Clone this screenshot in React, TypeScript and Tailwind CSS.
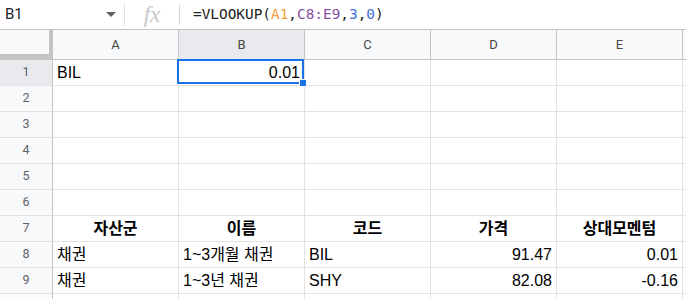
import type { ReactNode } from 'react'

const COLS = ['A', 'B', 'C', 'D', 'E', 'F']
const cellFont = { fontFamily: '"Liberation Sans", Arial, "Noto Sans CJK KR", sans-serif' }

type Cell = { text?: string; align?: 'left' | 'right' | 'center'; bold?: boolean }

const rows: Cell[][] = [
  [{ text: 'BIL' }, { text: '0.01', align: 'right' }],
  [],
  [],
  [],
  [],
  [],
  [
    { text: '자산군', align: 'center', bold: true },
    { text: '이름', align: 'center', bold: true },
    { text: '코드', align: 'center', bold: true },
    { text: '가격', align: 'center', bold: true },
    { text: '상대모멘텀', align: 'center', bold: true },
  ],
  [
    { text: '채권' },
    { text: '1~3개월 채권' },
    { text: 'BIL' },
    { text: '91.47', align: 'right' },
    { text: '0.01', align: 'right' },
  ],
  [
    { text: '채권' },
    { text: '1~3년 채권' },
    { text: 'SHY' },
    { text: '82.08', align: 'right' },
    { text: '-0.16', align: 'right' },
  ],
  [],
]

function FormulaBar() {
  const mono = { fontFamily: '"DejaVu Sans Mono", "Liberation Mono", monospace' }
  return (
    <div className="flex h-[30px] items-center border-b border-[#c4c4c4] bg-white">
      <div className="flex h-full w-[124px] items-center justify-between pl-[5px] pr-[8px]">
        <span className="text-[15px] text-[#202124]" style={{ fontFamily: 'Roboto, sans-serif' }}>
          B1
        </span>
        <svg width="10" height="5" viewBox="0 0 10 5">
          <path d="M0 0 L10 0 L5 5 Z" fill="#5f6368" />
        </svg>
      </div>
      <div className="h-[23px] w-px bg-[#e0e0e0]" />
      <div className="flex w-[54px] items-center justify-center">
        <span
          className="text-[23px] italic leading-none text-[#c4c7cb]"
          style={{ fontFamily: '"Liberation Serif", serif' }}
        >
          fx
        </span>
      </div>
      <div className="h-[19px] w-px bg-[#d5d5d5]" />
      <div className="pl-[13px] text-[14.4px] text-[#202124]" style={mono}>
        =VLOOKUP(<span className="text-[#f4a03c]">A1</span>,
        <span className="text-[#8a4fa3]">C8:E9</span>,<span className="text-[#3d6fd8]">3</span>,
        <span className="text-[#3d6fd8]">0</span>)
      </div>
    </div>
  )
}

function DataCell({ cell, selected }: { cell?: Cell; selected?: boolean }) {
  const align =
    cell?.align === 'right' ? 'justify-end' : cell?.align === 'center' ? 'justify-center' : 'justify-start'
  let content: ReactNode = null
  if (cell?.text) {
    content = (
      <span className={`whitespace-nowrap leading-[18px] ${cell.bold ? 'font-bold' : ''}`}>{cell.text}</span>
    )
  }
  return (
    <div
      className={`relative flex h-[26px] items-end border-r border-b border-[#e2e2e3] px-[4px] pb-[3px] text-[16px] text-black ${align}`}
      style={cellFont}
    >
      {content}
      {selected && (
        <div className="absolute -top-[1px] -left-[2px] right-0 bottom-[1px] z-10 border-2 border-[#1a73e8]">
          <div className="absolute -right-[5px] -bottom-[5px] h-[8px] w-[8px] border border-white bg-[#1a73e8]" />
        </div>
      )}
    </div>
  )
}

export default function App() {
  const headFont = { fontFamily: 'Roboto, "Liberation Sans", sans-serif' }
  return (
    <div className="h-[299px] w-[686px] overflow-hidden bg-white">
      <FormulaBar />
      <div className="grid grid-cols-[53px_126px_126px_126px_126px_126px_1fr]">
        <div className="h-[30px] border-r-[4px] border-b-[6px] border-[#c4c4c4] bg-[#f8f9fa]" />
        {COLS.map((c) => (
          <div
            key={c}
            className={`flex h-[30px] items-center justify-center border-r border-b border-[#c4c4c4] text-[13px] text-[#444746] ${
              c === 'B' ? 'bg-[#e8eaed]' : 'bg-[#f8f9fa]'
            }`}
            style={headFont}
          >
            {c === 'F' ? '' : c}
          </div>
        ))}
        {rows.map((r, i) => (
          <div key={i} className="contents">
            <div
              className={`flex h-[26px] items-center justify-center border-r border-b border-r-[#c4c4c4] border-b-[#e2e2e3] text-[12.5px] text-[#5f6368] ${
                i === 0 ? 'bg-[#e8eaed]' : 'bg-[#f8f9fa]'
              }`}
              style={headFont}
            >
              {i < 9 ? i + 1 : ''}
            </div>
            {COLS.map((c, j) => (
              <DataCell key={c} cell={r[j]} selected={i === 0 && j === 1} />
            ))}
          </div>
        ))}
      </div>
    </div>
  )
}
